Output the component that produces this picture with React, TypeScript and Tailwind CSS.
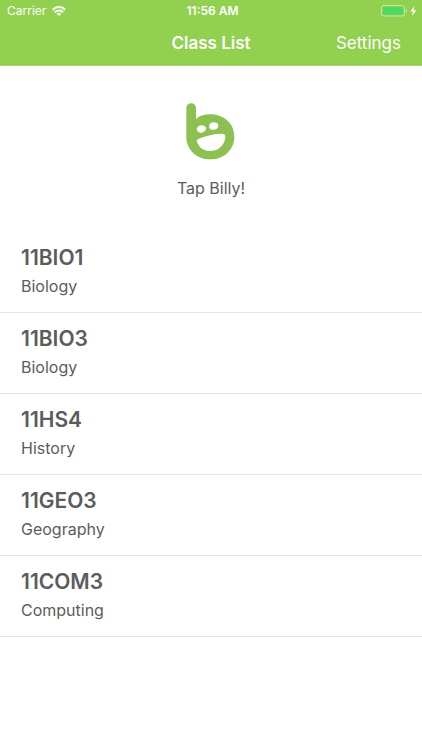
import React, { useState } from 'react';

interface ClassItem {
  code: string;
  subject: string;
}

const classes: ClassItem[] = [
  { code: '11BIO1', subject: 'Biology' },
  { code: '11BIO3', subject: 'Biology' },
  { code: '11HS4', subject: 'History' },
  { code: '11GEO3', subject: 'Geography' },
  { code: '11COM3', subject: 'Computing' },
];

const WifiIcon: React.FC = () => (
  <svg className="h-[10px] w-[14px]" viewBox="0 0 14 10" fill="none" stroke="currentColor" strokeWidth="2" aria-hidden="true">
    <path d="M0.7 3.8C4.2 0.2 9.8 0.2 13.3 3.8" />
    <path d="M2.9 6.2C5.2 3.9 8.8 3.9 11.1 6.2" />
    <path d="M7 9.9L4.7 7.7C6 6.5 8 6.5 9.3 7.7Z" fill="currentColor" stroke="none" />
  </svg>
);

const BatteryIcon: React.FC = () => (
  <svg className="h-3 w-[37px]" viewBox="0 0 37 12" aria-hidden="true">
    <rect x="0.5" y="0.5" width="23" height="10.5" rx="2.5" fill="none" stroke="#c5e6a2" />
    <rect x="2" y="2" width="20" height="7.5" rx="1.2" fill="#4cd964" />
    <path d="M25 4C26.4 4.4 26.4 7.1 25 7.5Z" fill="#c5e6a2" />
    <path d="M33.3 1L29.4 6.5H31.9L31.2 10.8L35.2 5.2H32.7Z" fill="#fff" />
  </svg>
);

const BillyLogo: React.FC = () => (
  <svg className="h-[57px] w-[50px]" viewBox="0 0 150 171" aria-hidden="true">
    <path
      d="M1 16C1 -4 30 -4 30 16V48C41 38 56 34 73 34C115 34 145 63 145 101C145 140 114 169 73 169C32 169 1 140 1 101Z"
      fill="#8cc152"
    />
    <ellipse cx="46" cy="78" rx="14" ry="11" fill="#fff" transform="rotate(-8 46 78)" />
    <ellipse cx="83" cy="69" rx="14" ry="11.5" fill="#fff" transform="rotate(-8 83 69)" />
    <path
      d="M39 107C32 109 31 113 34 119C41 136 58 146 77 144C99 142 115 127 118 103C119 95 115 92 107 92C83 92 60 98 39 107Z"
      fill="#fff"
    />
  </svg>
);

const App: React.FC = () => {
  const [selected, setSelected] = useState<string | null>(null);

  return (
    <div className="min-h-screen bg-white font-['Inter','Liberation_Sans',sans-serif] text-[#5c5c5c]">
      <header className="border-b border-[#a9d078] bg-[#92d050] text-white">
        <div className="grid h-[22px] grid-cols-[1fr_auto_1fr] items-center pl-[7px] pr-1 text-[12px]">
          <div className="flex items-center gap-[6px]">
            <span>Carrier</span>
            <WifiIcon />
          </div>
          <span className="font-semibold">11:56 AM</span>
          <div className="flex justify-end">
            <BatteryIcon />
          </div>
        </div>
        <div className="grid h-[43px] grid-cols-[1fr_auto_1fr] items-center px-[21px] text-[17px]">
          <h1 className="col-start-2 font-semibold">Class List</h1>
          <button type="button" className="justify-self-end">
            Settings
          </button>
        </div>
      </header>

      <main>
        <div className="flex justify-center pt-[37px] pb-8">
          <button type="button" className="flex flex-col items-center gap-4 text-[16px] leading-6">
            <BillyLogo />
            <span>Tap Billy!</span>
          </button>
        </div>

        <ul>
          {classes.map((item) => (
            <li key={item.code} className="border-b border-[#e6e6e6]">
              <button
                type="button"
                aria-pressed={selected === item.code}
                onClick={() => setSelected(item.code)}
                className="flex w-full flex-col px-[21px] pt-3 pb-3 text-left"
              >
                <span className="text-[21px] leading-7 font-semibold">{item.code}</span>
                <span className="text-[16px] leading-7">{item.subject}</span>
              </button>
            </li>
          ))}
        </ul>
      </main>
    </div>
  );
};

export default App;
